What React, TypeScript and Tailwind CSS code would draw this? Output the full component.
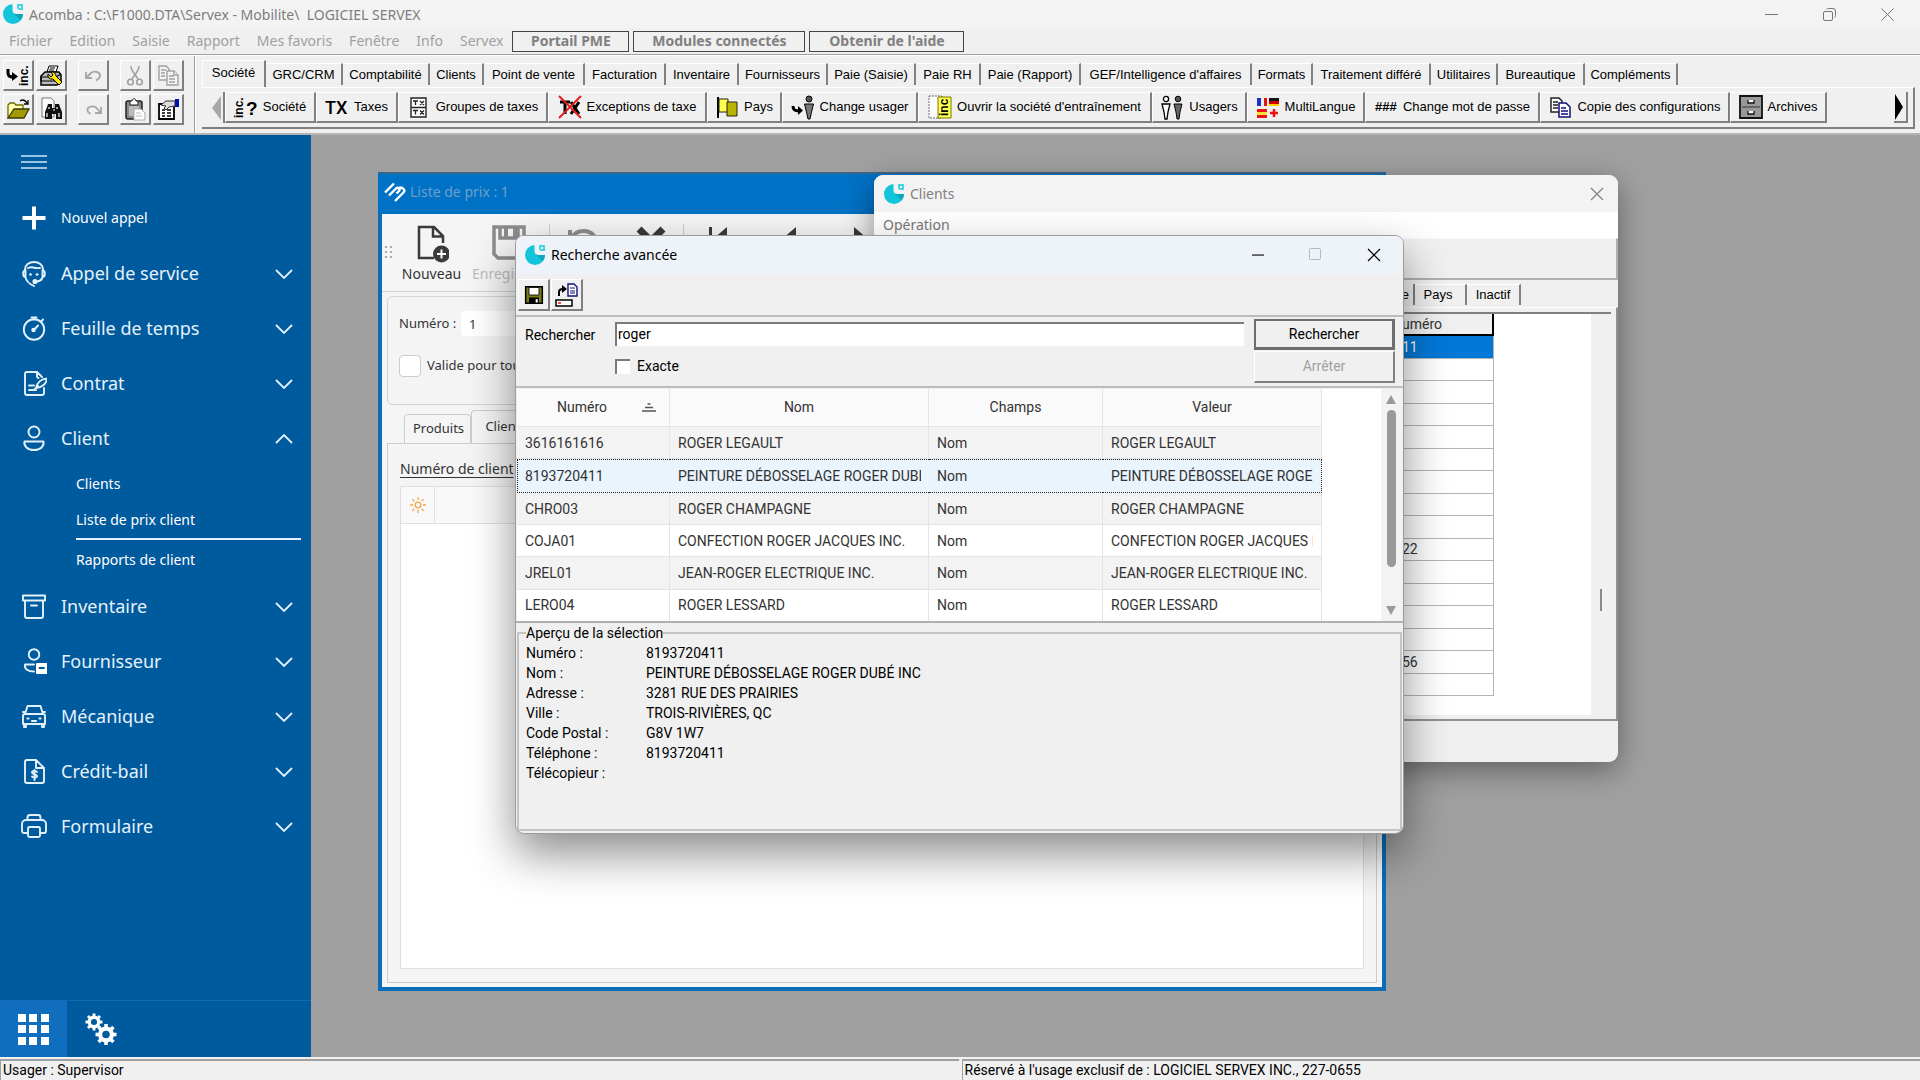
import { ReactNode } from 'react';

const raised = 'border-t border-l border-t-white border-l-white border-b-2 border-r-2 border-b-[#808080] border-r-[#808080] bg-[#f0f0f0]';

/* ---------- logos ---------- */

function AcombaLogo({ className = '' }: { className?: string }) {
    return (
        <svg width="22" height="22" viewBox="0 0 22 22" className={`shrink-0 ${className}`}>
            <path d="M10.500 1A10 10 0 1 0 21 11H14.500a4 4 0 0 1-4-4Z" fill="#12c5da" />
            <path d="M14 11h7a10 10 0 0 1-2.500 6.500L12 10.500Z" fill="#0fa5ba" />
            <path d="M15 1h6v6h-3.500A2.500 2.500 0 0 1 15 4.500Z" fill="#43d3e2" />
            <rect x="17" y="3" width="2" height="2" fill="#e9fafc" />
        </svg>
    );
}

function ServexLogo() {
    return (
        <svg width="22" height="22" viewBox="0 0 22 22" fill="none" stroke="#fff" strokeWidth="2.400" strokeLinejoin="round" className="shrink-0">
            <path d="M1 11.500 10 2.500" />
            <path d="M5 14.500 11.500 8c1.500-1.500 2.500-1.500 3.500-.5s.5 2-.5 3l-2 2" />
            <path d="M14 8c2-2 4-1.500 5.500 0s1 2.500 0 3.500L11 20" />
        </svg>
    );
}

/* ---------- classic toolbar icons ---------- */

const classicIcons: Record<string, ReactNode> = {
    company: (
        <>
            <path d="M2 6v4c0 3 2 4 5 4" fill="none" stroke="#000" strokeWidth="3" />
            <path d="M6 9v9l6-4.500Z" fill="#000" />
            <text transform="translate(22 23) rotate(-90)" fontSize="12" fontWeight="700" fontFamily="Liberation Sans, sans-serif">inc.</text>
        </>
    ),
    print: (
        <>
            <path d="M8 9 10 3h9l-2 6Z" fill="#fff" stroke="#000" />
            <path d="M2 13 6 9h14l2 3v6l-4 4H2Z" fill="#bbb" stroke="#000" strokeWidth="1.500" />
            <path d="M2 14h15v4H2ZM17 14l5-3M11 5h5M10 7h5" fill="none" stroke="#000" strokeWidth="1.200" />
            <path d="M9 11a4 4 0 0 0 5 5l6 6 3-3-6-6a4 4 0 0 0-5-4l2 3-2 2Z" fill="#ffe600" stroke="#000" />
        </>
    ),
    undo: <path d="M5 9v6h6M5.500 14.500 10 10c3-2.500 9-1.500 9 2.500 0 2-2 4-4 5" fill="none" stroke="#a6a6a6" strokeWidth="1.800" />,
    redo: <path d="M20 10v6h-6M19.500 15.500 15 10.500c-4-2.500-9-.5-8.500 3 .3 1.500 1 2.500 3 3.500" fill="none" stroke="#a6a6a6" strokeWidth="1.800" />,
    cut: (
        <g fill="none" stroke="#a0a0a0" strokeWidth="1.600">
            <path d="M8 3c0 5 4 8 7 13M16 3c0 5-4 8-7 13" />
            <circle cx="7.500" cy="19" r="2.800" />
            <circle cx="16.500" cy="19" r="2.800" />
        </g>
    ),
    copy: (
        <g fill="#f4f4f4" stroke="#a0a0a0" strokeWidth="1.400">
            <path d="M3 3h7l3 3v11H3Z" />
            <path d="M11 8h7l4 4v10H11Z" />
            <path d="M5 7h5M5 10h4M5 13h4M13 13h5M13 16h6M13 19h6M18 8v4h4" />
        </g>
    ),
    open: (
        <>
            <path d="M2 21V8l2-2h4l2 2h7v4" fill="#ffffb0" stroke="#6e6a00" strokeWidth="1.300" />
            <path d="M2 21 8 12h15l-5 9Z" fill="#a39c00" stroke="#3c3900" strokeWidth="1.300" />
            <path d="M14 4c3-2 5-1 7 2M22 3v4h-4" fill="none" stroke="#000" strokeWidth="1.300" />
        </>
    ),
    find: (
        <>
            <path d="M3 1h9l3 3v16H3Z" fill="#fff" stroke="#777" />
            <path d="M9 7h4v4h3V7h4l1 3 2 5v7h-6v-5h-4v5H6v-7l2-5Z" fill="#111" />
            <path d="M10 10v2M18 10v2M8 16v4M20 16v4M14 13h2" stroke="#fff" strokeWidth="1.200" />
        </>
    ),
    paste: (
        <>
            <rect x="3" y="4" width="16" height="18" rx="2" fill="#888" stroke="#222" strokeWidth="1.500" />
            <path d="M7 5c0-1 1-1 2-1 0-3 4-3 4 0 1 0 2 0 2 1v3H7Z" fill="#fff" stroke="#222" />
            <rect x="6" y="9" width="10" height="10" fill="#bbb" />
            <path d="M11 12h7l4 4v7H11Z" fill="#fff" stroke="#aaa" />
            <path d="M13 16h5M13 19h6" stroke="#bbb" />
        </>
    ),
    props: (
        <>
            <path d="M3 7h15v15H3Z" fill="#fff" stroke="#000" strokeWidth="1.800" />
            <path d="M6 13h3M11 13h4M6 16h3M11 16h4M6 19h3M11 19h4" stroke="#000" strokeWidth="1.300" />
            <path d="M5 8 10 4h9v5l-6 1-3 3-2-2 2-2Z" fill="#ddd" stroke="#333" />
            <rect x="19" y="2" width="4" height="8" fill="#0010a8" />
        </>
    ),
    companyHelp: (
        <>
            <text transform="translate(9 23) rotate(-90)" fontSize="12" fontWeight="700" fontFamily="Liberation Sans, sans-serif">inc.</text>
            <text x="12" y="20" fontSize="19" fontWeight="700" fontFamily="Liberation Sans, sans-serif">?</text>
        </>
    ),
    tax: <text x="0" y="19" fontSize="18" fontWeight="500" fontFamily="Roboto, Liberation Sans, sans-serif">TX</text>,
    taxGroup: (
        <>
            <path d="M4 3h15v19H4ZM4 12.500h15" fill="#fff" stroke="#222" strokeWidth="1.400" />
            <path d="M6 6h5M8.500 6v4M13 6l4 4M17 6l-4 4M6 15.500h5M8.500 15.500v4M13 15.500l4 4M17 15.500l-4 4" stroke="#222" strokeWidth="1.300" />
        </>
    ),
    taxCross: (
        <>
            <path d="M2 7h10M7 7v12M13 7l8 12M21 7l-8 12" stroke="#000" strokeWidth="3" />
            <path d="M1 1l22 22M23 1 1 23" stroke="#e4201f" strokeWidth="2" />
        </>
    ),
    flag: (
        <>
            <path d="M3 2v21" stroke="#000" strokeWidth="2" />
            <path d="M4 4h9v13H4Z" fill="#ffff4d" stroke="#222" />
            <path d="M12 7h10v14H12Z" fill="#b9b400" stroke="#222" />
        </>
    ),
    userChange: (
        <>
            <path d="M2 11c0 4 2 5 6 5" fill="none" stroke="#000" strokeWidth="3" />
            <path d="M7 11v9l5-4.500Z" fill="#000" />
            <circle cx="18" cy="4" r="3" fill="#555" stroke="#000" />
            <path d="M13.500 9h9l-2 8-1.500 7h-2L15.500 17Z" fill="#777" stroke="#000" />
        </>
    ),
    training: (
        <>
            <path d="M1 1h13v22H1Z" fill="#fff" stroke="#666" strokeDasharray="2 1" />
            <path d="M10 2h13v21H10Z" fill="#ffff4d" stroke="#7c7700" />
            <text transform="translate(20 21) rotate(-90)" fontSize="12" fontWeight="700" fontFamily="Liberation Sans, sans-serif">inc</text>
        </>
    ),
    users: (
        <>
            <circle cx="6" cy="4" r="2.600" fill="#fff" stroke="#000" strokeWidth="1.300" />
            <path d="M2 9h8l-2 8-1 7H5L4 17Z" fill="#fff" stroke="#000" strokeWidth="1.300" />
            <circle cx="18" cy="4" r="2.800" fill="#555" stroke="#000" />
            <path d="M14 9h8l-2 8-1 7h-2l-1-7Z" fill="#666" stroke="#000" />
        </>
    ),
    languages: (
        <>
            <path d="M1 3h4v8H1Z" fill="#1e2fd0" />
            <path d="M8 3h3v8H8Z" fill="#e11" />
            <path d="M13 3h10v3H13Z" fill="#111" />
            <path d="M13 6h10v3H13Z" fill="#c00" />
            <path d="M13 9h10v2H13Z" fill="#fc0" />
            <path d="M1 14h10v3H1ZM1 20h10v3H1Z" fill="#e11" />
            <path d="M1 17h10v3H1Z" fill="#fd3" />
            <path d="M18 14v8M14 18h8" stroke="#e11" strokeWidth="2.500" />
        </>
    ),
    hashes: <text x="1" y="16" fontSize="13" fontWeight="700" fontFamily="Liberation Sans, sans-serif">###</text>,
    copyConfig: (
        <g fill="#fff" strokeWidth="1.500">
            <path d="M3 3h8l3 3v11H3Z" stroke="#222" />
            <path d="M5 7h5M5 10h5M5 13h5" stroke="#222" />
            <path d="M11 8h7l4 4v10H11Z" stroke="#10107c" />
            <path d="M13 13h5M13 16h7M13 19h7" stroke="#10107c" />
        </g>
    ),
    archive: (
        <>
            <path d="M1 1h22v22H1Z" fill="#999" stroke="#111" strokeWidth="1.800" />
            <path d="M3 12h18" stroke="#555" strokeWidth="1.500" />
            <path d="M9 5v3h6V5M9 16v3h6v-3" fill="#fff" stroke="#111" strokeWidth="1.300" />
        </>
    ),
    save: (
        <>
            <path d="M2 2h20v20H2Z" fill="#7b7a16" stroke="#000" strokeWidth="1.800" />
            <path d="M6 3h12v9H6Z" fill="#fff" stroke="#000" />
            <path d="M6 15h12v7H6Z" fill="#000" />
            <path d="M14 17h2.500v4H14Z" fill="#fff" />
        </>
    ),
    restore: (
        <>
            <path d="M4 13V9c0-2 2-3 4-3" fill="none" stroke="#000" strokeWidth="2" />
            <path d="M7 2v8l5-4Z" fill="#000" />
            <path d="M13 1h6l3 3v9h-9Z" fill="#fff" stroke="#10107c" strokeWidth="1.400" />
            <path d="M15 5h5M15 8h5M15 10h5" stroke="#10107c" />
            <path d="M1 17h16v6H1Z" fill="#fff" stroke="#000" strokeWidth="1.500" />
            <path d="M3 20h3" stroke="#e11" strokeWidth="1.500" />
        </>
    ),
};

function ClassicIcon({ name, size = 24 }: { name: string; size?: number }) {
    return <svg width={size} height={size} viewBox="0 0 24 24" className="shrink-0 overflow-visible">{classicIcons[name]}</svg>;
}

/* ---------- sidebar icons ---------- */

const navIcons: Record<string, ReactNode> = {
    headset: (
        <>
            <path d="M4 11V9.500C4 5 8 2 13 2s9 3 9 7.500V11" />
            <path d="M4 10.500c-2.500.5-2.500 6.500.5 6.500V10M4.500 17c.5 4 4 7 8.500 9M22 10.500c2.500.5 2.500 6.500-.5 6.500v-7M21.500 17c-.5 3-3 4.500-7 4.500" />
            <path d="M7 8c5-2.500 5 1 12 0" />
            <circle cx="9.500" cy="14.500" r="1" fill="#e3f1fb" strokeWidth="0.800" />
            <circle cx="16" cy="14.500" r="1" fill="#e3f1fb" strokeWidth="0.800" />
            <circle cx="14" cy="21.500" r="1.600" fill="#e3f1fb" />
        </>
    ),
    timer: (
        <>
            <circle cx="13" cy="14.500" r="10.200" />
            <path d="M10.500 2.500h5M13 2.500v2M20.500 6l1.500-1.500M13 15l4-4.500" />
            <circle cx="12.500" cy="15" r="1.300" fill="#fff" />
        </>
    ),
    contract: (
        <>
            <path d="M16 2H6a2 2 0 0 0-2 2v19a2 2 0 0 0 2 2h15a2 2 0 0 0 2-2v-5" />
            <path d="M16 2v4.500c0 1 .5 1.500 1.500 1.500M16 2l5 5" />
            <path d="M15 18c1-5 5-9 11-9.500-.5 5-5 9-11 9.500Zm-2 2 4-4" />
            <path d="M8 15.500h5M8 20h7" />
        </>
    ),
    person: (
        <>
            <circle cx="13" cy="7" r="5.500" />
            <path d="M3.500 16.500h19c1 4.500-3 8.500-9.500 8.500s-10.500-4-9.500-8.500Z" />
        </>
    ),
    box: <path d="M2 2.500h22v5H2ZM4 7.500h18V23a2 2 0 0 1-2 2H6a2 2 0 0 1-2-2ZM10 12.500h6" />,
    supplier: (
        <>
            <circle cx="13" cy="6.500" r="5.300" />
            <path d="M13 16.500H4c-1 4.500 3 7 9 7" />
            <rect x="15" y="15" width="11.500" height="11" rx="1" fill="#fff" stroke="none" />
            <path d="M18.500 20h4.500" stroke="#005a9e" />
        </>
    ),
    car: (
        <>
            <path d="M4 11 6.500 3h13L22 11M4 11h18a2 2 0 0 1 2 2v8H2v-8a2 2 0 0 1 2-2ZM3 21v3h2v-3M21 21v3h2v-3M2 9h2M22 9h2" />
            <path d="M6.500 15.500h1M18.500 15.500h1M11 18h4" strokeWidth="2.200" />
        </>
    ),
    credit: (
        <>
            <path d="M15 2H6a2 2 0 0 0-2 2v19a2 2 0 0 0 2 2h15a2 2 0 0 0 2-2V10ZM15 2v8h8" />
            <path d="M16 14c-1-1.500-5-1.500-5 .5s5 1.500 5 3.500-4 2-5 .5M13.500 12v10" />
        </>
    ),
    printer: (
        <>
            <path d="M6.500 7V4.500a2.500 2.500 0 0 1 2.500-2.500h8a2.500 2.500 0 0 1 2.500 2.500V7M7 20H3a2 2 0 0 1-2-2v-7a4 4 0 0 1 4-4h16a4 4 0 0 1 4 4v7a2 2 0 0 1-2 2h-4" />
            <rect x="7" y="14" width="12" height="10" rx="1.500" />
        </>
    ),
};

function NavIcon({ name }: { name: string }) {
    return (
        <svg width="26" height="27" viewBox="0 0 26 27" fill="none" stroke="#e3f1fb" strokeWidth="1.900" strokeLinecap="round" strokeLinejoin="round" className="shrink-0">
            {navIcons[name]}
        </svg>
    );
}

function Gear({ cx, cy, r }: { cx: number; cy: number; r: number }) {
    return (
        <>
            <circle cx={cx} cy={cy} r={r * 0.560} fill="none" stroke="#fff" strokeWidth={r * 0.400} />
            {[0, 45, 90, 135, 180, 225, 270, 315].map((a) => (
                <rect key={a} x={cx - r * 0.170} y={cy - r} width={r * 0.340} height={r * 0.360} fill="#fff" transform={`rotate(${a} ${cx} ${cy})`} />
            ))}
        </>
    );
}

const menuItems = ['Fichier', 'Edition', 'Saisie', 'Rapport', 'Mes favoris', 'Fenêtre', 'Info', 'Servex'];

const menuButtons = [
    { label: 'Portail PME', width: 'w-[117px]' },
    { label: 'Modules connectés', width: 'w-[172px]' },
    { label: "Obtenir de l'aide", width: 'w-[155px]' },
];

const quickTools = [
    [['company', 'Société'], ['print', 'Imprimer'], ['undo', 'Annuler'], ['cut', 'Couper'], ['copy', 'Copier']],
    [['open', 'Ouvrir'], ['find', 'Chercher'], ['redo', 'Rétablir'], ['paste', 'Coller'], ['props', 'Propriétés']],
];

const ribbonTabs = [
    { label: 'GRC/CRM', width: 'w-[77px]' },
    { label: 'Comptabilité', width: 'w-[87px]' },
    { label: 'Clients', width: 'w-[54px]' },
    { label: 'Point de vente', width: 'w-[101px]' },
    { label: 'Facturation', width: 'w-[81px]' },
    { label: 'Inventaire', width: 'w-[73px]' },
    { label: 'Fournisseurs', width: 'w-[89px]' },
    { label: 'Paie (Saisie)', width: 'w-[88px]' },
    { label: 'Paie RH', width: 'w-[65px]' },
    { label: 'Paie (Rapport)', width: 'w-[100px]' },
    { label: "GEF/Intelligence d'affaires", width: 'w-[171px]' },
    { label: 'Formats', width: 'w-[61px]' },
    { label: 'Traitement différé', width: 'w-[118px]' },
    { label: 'Utilitaires', width: 'w-[67px]' },
    { label: 'Bureautique', width: 'w-[87px]' },
    { label: 'Compléments', width: 'w-[93px]' },
];

const ribbonButtons = [
    { icon: 'companyHelp', label: 'Société', width: 'w-[91px]' },
    { icon: 'tax', label: 'Taxes', width: 'w-[82px]' },
    { icon: 'taxGroup', label: 'Groupes de taxes', width: 'w-[150px]' },
    { icon: 'taxCross', label: 'Exceptions de taxe', width: 'w-[159px]' },
    { icon: 'flag', label: 'Pays', width: 'w-[75px]' },
    { icon: 'userChange', label: 'Change usager', width: 'w-[136px]' },
    { icon: 'training', label: "Ouvrir la société d'entraînement", width: 'w-[234px]' },
    { icon: 'users', label: 'Usagers', width: 'w-[95px]' },
    { icon: 'languages', label: 'MultiLangue', width: 'w-[118px]' },
    { icon: 'hashes', label: 'Change mot de passe', width: 'w-[175px]' },
    { icon: 'copyConfig', label: 'Copie des configurations', width: 'w-[190px]' },
    { icon: 'archive', label: 'Archives', width: 'w-[97px]' },
];

const navItems = [
    { icon: 'headset', label: 'Appel de service' },
    { icon: 'timer', label: 'Feuille de temps' },
    { icon: 'contract', label: 'Contrat' },
    { icon: 'person', label: 'Client', children: ['Clients', 'Liste de prix client', 'Rapports de client'] },
    { icon: 'box', label: 'Inventaire' },
    { icon: 'supplier', label: 'Fournisseur' },
    { icon: 'car', label: 'Mécanique' },
    { icon: 'credit', label: 'Crédit-bail' },
    { icon: 'printer', label: 'Formulaire' },
];

const results = [
    ['3616161616', 'ROGER LEGAULT'],
    ['8193720411', 'PEINTURE DÉBOSSELAGE ROGER DUBÉ INC'],
    ['CHRO03', 'ROGER CHAMPAGNE'],
    ['COJA01', 'CONFECTION ROGER JACQUES INC.'],
    ['JREL01', 'JEAN-ROGER ELECTRIQUE INC.'],
    ['LERO04', 'ROGER LESSARD'],
];

const preview = [
    ['Numéro :', '8193720411'],
    ['Nom :', 'PEINTURE DÉBOSSELAGE ROGER DUBÉ INC'],
    ['Adresse :', '3281 RUE DES PRAIRIES'],
    ['Ville :', 'TROIS-RIVIÈRES, QC'],
    ['Code Postal :', 'G8V 1W7'],
    ['Téléphone :', '8193720411'],
    ['Télécopieur :', ''],
];

const clientNumbers = ['11', '', '', '', '', '', '', '', '', '22', '', '', '', '', '56', ''];

/* ---------- application frame ---------- */

function TitleBar() {
    return (
        <div className="flex h-[28px] items-center bg-[#f3f3f3] pl-[2px]">
            <AcombaLogo />
            <h1 className="ml-[5px] whitespace-pre text-[14px] text-[#7d7d7d]">{'Acomba : C:\\F1000.DTA\\Servex - Mobilite\\  LOGICIEL SERVEX'}</h1>
            <div className="ml-auto mr-[26px] flex items-center gap-[45px]">
                <button aria-label="Réduire"><svg width="13" height="13" stroke="#777"><path d="M0 6.500h13" /></svg></button>
                <button aria-label="Restaurer">
                    <svg width="13" height="13" fill="none" stroke="#777">
                        <rect x="0.500" y="3.500" width="9" height="9" rx="1.500" />
                        <path d="M3.500 1.500c.5-1 1-1 2-1H10a2.500 2.500 0 0 1 2.500 2.500v4.500c0 1 0 1.500-1 2" />
                    </svg>
                </button>
                <button aria-label="Fermer"><svg width="13" height="13" stroke="#777"><path d="M.5.5l12 12M12.500.5l-12 12" /></svg></button>
            </div>
        </div>
    );
}

function MenuBar() {
    return (
        <nav className="flex h-[27px] items-center border-b border-[#a0a0a0] bg-[#f0f0f0] pl-[9px] text-[14px] text-[#a0a0a0]">
            <div className="flex gap-[17px] pb-[2px]">
                {menuItems.map((item) => <button key={item}>{item}</button>)}
            </div>
            <div className="ml-[9px] flex gap-1">
                {menuButtons.map((b) => (
                    <button key={b.label} className={`h-[21px] border border-[#444] text-[14px] leading-none font-bold text-[#808080] ${b.width}`}>{b.label}</button>
                ))}
            </div>
        </nav>
    );
}

function Ribbon() {
    return (
        <div className="flex h-[80px] border-t border-b-2 border-t-white border-b-[#b4b4b4] bg-[#f0f0f0] font-['Liberation_Sans',sans-serif] text-[13px] text-black">
            <div className="flex flex-col gap-[3px] py-1 pl-[3px]">
                {quickTools.map((row, i) => (
                    <div key={i} className="flex">
                        {row.map(([icon, label], j) => (
                            <button key={icon} aria-label={label} className={`flex size-[31px] items-center justify-center ${raised} ${j === 1 || j === 4 ? 'ml-[2px]' : j ? 'ml-[11px]' : ''}`}>
                                <ClassicIcon name={icon} />
                            </button>
                        ))}
                    </div>
                ))}
            </div>
            <div className="ml-[10px] border-l border-r border-l-[#a0a0a0] border-r-white" />
            <div className="ml-[6px] mr-[5px] flex min-w-0 flex-1 flex-col pb-[4px]">
                <div className="flex h-[31px] items-end">
                    <button className="h-[27px] w-[64px] border-t border-l border-r-2 border-white border-r-[#808080] pb-[3px]">Société</button>
                    {ribbonTabs.map((t) => (
                        <button key={t.label} className={`mb-[2px] h-[22px] whitespace-nowrap border-t border-r-2 border-t-white border-r-[#808080] text-center ${t.width}`}>{t.label}</button>
                    ))}
                </div>
                <div className="flex flex-1 items-start border-t border-r-2 border-b-2 border-t-white border-r-[#808080] border-b-[#808080] pt-[4px] pl-[9px]">
                    <button aria-label="Défiler à gauche" className="flex h-[31px] w-[14px] items-center border-r-2 border-[#808080]">
                        <svg width="11" height="24"><path d="M10 0v24L1 12Z" fill="#a8a8a8" /></svg>
                    </button>
                    {ribbonButtons.map((b) => (
                        <button key={b.label} className={`flex h-[31px] shrink-0 items-center justify-center gap-[5px] whitespace-nowrap ${raised} ${b.width}`}>
                            <ClassicIcon name={b.icon} />
                            {b.label}
                        </button>
                    ))}
                    <button aria-label="Défiler à droite" className="ml-auto mr-[5px] flex h-[31px] w-[14px] items-center border-r-2 border-b-2 border-[#808080]">
                        <svg width="10" height="26"><path d="M1 0v26L9 13Z" fill="#000" /></svg>
                    </button>
                </div>
            </div>
        </div>
    );
}

function Sidebar() {
    return (
        <aside className="flex w-[311px] shrink-0 flex-col bg-[#005a9e] text-[#e6f2fb]">
            <button aria-label="Menu" className="h-[54px] pl-[21px]">
                <svg width="26" height="14" stroke="#cfe6f7" strokeWidth="1.500"><path d="M0 1h26M0 7h26M0 13h26" /></svg>
            </button>
            <button className="flex h-[57px] items-center gap-[14px] pl-[21px] text-[14px] text-white">
                <svg width="26" height="26" stroke="#fff" strokeWidth="4"><path d="M13 1.500v23M1.500 13h23" /></svg>
                Nouvel appel
            </button>
            {navItems.map((item) => (
                <div key={item.label}>
                    <button className="flex h-[55px] w-full items-center gap-[14px] pr-[18px] pl-[21px] text-[18px]">
                        <NavIcon name={item.icon} />
                        {item.label}
                        <svg width="18" height="10" fill="none" stroke="#e3f1fb" strokeWidth="1.800" className="ml-auto">
                            <path d={item.children ? 'M1 9l8-8 8 8' : 'M1 1l8 8 8-8'} />
                        </svg>
                    </button>
                    {item.children && (
                        <ul className="mr-[10px] ml-[76px] text-[14px] text-white">
                            {item.children.map((c, i) => (
                                <li key={c} className={`flex items-center ${i === 0 ? 'h-[35px]' : 'h-[39px]'} ${i === 1 ? 'border-b-2 border-[#e6f2fb]' : ''}`}>
                                    <a href="#">{c}</a>
                                </li>
                            ))}
                        </ul>
                    )}
                </div>
            ))}
            <div className="mt-auto flex h-[57px] border-t border-[#136ab3]">
                <button aria-label="Modules" className="flex w-[67px] items-center justify-center bg-[#106ebe]">
                    <svg width="31" height="31" fill="#fff">
                        {[0, 11, 23].map((y) => [0, 11, 23].map((x) => <rect key={`${x}-${y}`} x={x} y={y} width="8" height="8" />))}
                    </svg>
                </button>
                <button aria-label="Configuration" className="flex w-[67px] items-center justify-center">
                    <svg width="32" height="33" viewBox="0 0 32 33">
                        <Gear cx={9} cy={9} r={8.5} />
                        <Gear cx={21} cy={21.500} r={10.500} />
                    </svg>
                </button>
            </div>
        </aside>
    );
}

/* ---------- MDI windows ---------- */

function PriceListWindow() {
    return (
        <section className="absolute top-[37px] left-[67px] flex h-[819px] w-[1008px] flex-col border-4 border-t-2 border-[#0b6cb8] border-t-[#3d6688] bg-[#f5f5f5]">
            <header className="-mx-1 flex h-[40px] items-center bg-[#0072c6] pb-[5px] pl-[6px] text-[14px] text-[#6f9fc9]">
                <ServexLogo />
                <h2 className="ml-1">Liste de prix : 1</h2>
            </header>
            <div className="flex h-[78px] shrink-0 border-b border-[#d2d2d2] pt-[10px] text-[14px] text-[#333]">
                <svg width="10" height="14" fill="#aaa" className="mt-[22px] ml-[3px]">
                    {[0, 5, 10].map((y) => [0, 5].map((x) => <rect key={`${x}-${y}`} x={x} y={y} width="2" height="2" />))}
                </svg>
                <button className="flex w-[73px] flex-col items-center">
                    <svg width="34" height="39" viewBox="-2 -1 34 39" fill="none" stroke="#3a3a3a" strokeWidth="2.500">
                        <path d="M17 33H2V2h15l9 9v7M16 2v9.500h10" />
                        <circle cx="24.500" cy="29" r="8.500" fill="#3a3a3a" stroke="none" />
                        <path d="M24.500 24.500v9M20 29h9" stroke="#fff" strokeWidth="2" />
                    </svg>
                    Nouveau
                </button>
                <button disabled className="flex w-[81px] flex-col items-center text-[#bbb]">
                    <svg width="34" height="39" viewBox="0 0 34 39" fill="none" stroke="#8c8c8c" strokeWidth="3.500">
                        <path d="M2 3h30v31H6l-4-4ZM8 3v11h18V3" />
                        <path d="M12 2h4v11h-4ZM21 2h4v11h-4Z" fill="#8c8c8c" stroke="none" />
                    </svg>
                    Enregistrer
                </button>
                <div className="border-l border-[#ccc]" />
                <button aria-label="Annuler" disabled className="flex w-[67px] justify-center">
                    <svg width="34" height="34" fill="none" stroke="#8c8c8c" strokeWidth="4"><path d="M3 6v10h10M5 14C9 5 24 4 29 15s-4 16-12 16" /></svg>
                </button>
                <button aria-label="Supprimer" className="flex w-[66px] justify-center">
                    <svg width="34" height="34" stroke="#3a3a3a" strokeWidth="7"><path d="M6 5l24 24M30 5 6 29" /></svg>
                </button>
                <div className="border-l border-[#ccc]" />
                <button aria-label="Premier" className="flex w-[68px] justify-center">
                    <svg width="20" height="34" fill="#3a3a3a"><path d="M1 3h3v24H1ZM19 3v24L5 15Z" /></svg>
                </button>
                <button aria-label="Précédent" className="flex w-[70px] justify-center">
                    <svg width="20" height="34" fill="#3a3a3a"><path d="M19 3v24L5 15Z" /></svg>
                </button>
                <button aria-label="Suivant" className="flex w-[82px] justify-center">
                    <svg width="20" height="34" fill="#3a3a3a"><path d="M1 3v24l14-12Z" /></svg>
                </button>
            </div>
            <div className="mx-[5px] mt-1 h-[109px] shrink-0 rounded-[5px] border border-[#d4d4d4] bg-[#f4f4f4] pt-[14px] pl-[11px] text-[14px] text-[#333]">
                <div className="flex h-[25px] items-center">
                    <label htmlFor="price-number" className="w-[62px] whitespace-nowrap text-[13px]">Numéro :</label>
                    <input id="price-number" defaultValue="1" className="h-[25px] w-[140px] rounded-[4px] bg-white pl-[8px] text-[13px]" />
                </div>
                <label className="mt-[19px] flex items-center gap-[6px] text-[13px]">
                    <input type="checkbox" className="size-[22px] appearance-none rounded-[4px] border border-[#ccc] bg-white" />
                    Valide pour tous les clients
                </label>
            </div>
            <div className="mt-1 flex h-[34px] shrink-0 items-end pl-[22px] text-[13px] text-[#333]">
                <button className="h-[29px] w-[67px] rounded-t-[4px] border border-b-0 border-[#ccc] pl-[2px]">Produits</button>
                <button className="h-[33px] w-[70px] rounded-t-[4px] border border-b-0 border-[#ccc] bg-[#f5f5f5]">Clients</button>
            </div>
            <div className="mx-[5px] mb-1 flex flex-1 flex-col border border-[#ccc] bg-[#f4f4f4] px-3 pb-[13px]">
                <a href="#" className="mt-[14px] mb-[6px] self-start text-[14px] leading-[22px] text-[#333] underline underline-offset-[3px]">Numéro de client</a>
                <div className="flex-1 border border-[#e0e0e0] bg-white">
                    <div className="flex h-[37px] border-b border-[#e0e0e0] bg-[#f9f9f9]">
                        <div className="flex w-[34px] items-center justify-center border-r border-[#e0e0e0]">
                            <svg width="16" height="16" viewBox="0 0 16 16" fill="none" stroke="#f5a54a" strokeWidth="1.300">
                                <circle cx="8" cy="8" r="2.800" />
                                <path d="M8 0v3M8 13v3M0 8h3M13 8h3M2.300 2.300l2 2M11.700 11.700l2 2M13.700 2.300l-2 2M4.300 11.700l-2 2" />
                            </svg>
                        </div>
                    </div>
                </div>
            </div>
        </section>
    );
}

function ClientsWindow() {
    return (
        <section className="absolute top-[40px] left-[563px] flex h-[587px] w-[744px] flex-col overflow-hidden rounded-[9px] bg-[#f0f0f0] shadow-[0_8px_30px_rgba(0,0,0,0.4)]">
            <header className="flex h-[37px] shrink-0 items-center bg-[#f3f3f3] pl-[9px] text-[14px] text-[#808080]">
                <AcombaLogo />
                <h2 className="ml-[5px]">Clients</h2>
                <button aria-label="Fermer" className="mr-[14px] ml-auto"><svg width="14" height="14" stroke="#808080" strokeWidth="1.200"><path d="M1 1l12 12M13 1 1 13" /></svg></button>
            </header>
            <nav className="h-[26px] shrink-0 bg-white pl-[9px] text-[14px] leading-[26px] text-[#777]"><button>Opération</button></nav>
            <div className="h-[42px] shrink-0 border-t border-r-2 border-b-2 border-t-[#f8f8f8] border-[#b0b0b0]" />
            <div className="flex h-[27px] shrink-0 items-start justify-end pt-[4px] pr-[97px] font-['Liberation_Sans',sans-serif] text-[13px] text-black">
                <button className="h-[21px] w-[80px] border-r-2 border-[#808080] pr-1 text-right">Code</button>
                <button className="h-[21px] w-[52px] border-r-2 border-t border-t-white border-[#808080] pr-1">Pays</button>
                <button className="h-[21px] w-[54px] border-r-2 border-t border-t-white border-[#808080]">Inactif</button>
            </div>
            <div className="flex min-h-0 flex-1 border-t border-r-2 border-b-2 border-t-white border-[#909090] pt-[4px] pr-[5px] pb-[4px] font-['Roboto','Liberation_Sans',sans-serif] text-[14px] text-[#333]">
                <div className="flex flex-1 border-t-2 border-[#808080] bg-white">
                    <div className="w-[620px]">
                        <table className="ml-auto h-[382px] w-[110px] table-fixed border-separate border-spacing-0">
                            <thead>
                                <tr className="h-[22px]"><th className="h-[22px] border-r-2 border-b-2 border-black bg-[#f0f0f0] p-0 pl-2 text-left leading-none font-normal">Numéro</th></tr>
                            </thead>
                            <tbody>
                                {clientNumbers.map((n, i) => (
                                    <tr key={i}>
                                        <td className={`border-r border-b border-[#b4b4b4] p-0 pl-[18px] leading-[18px] ${i === 0 ? 'bg-[#0078d7] text-white' : ''}`}>{n || '\u00a0'}</td>
                                    </tr>
                                ))}
                            </tbody>
                        </table>
                    </div>
                    <div className="ml-auto flex w-[20px] justify-center bg-[#f0f0f0] pt-[275px]">
                        <div className="h-[22px] w-[2px] bg-[#8a8a8a]" />
                    </div>
                </div>
            </div>
            <footer className="h-[41px] shrink-0" />
        </section>
    );
}

function SearchDialog() {
    return (
        <section className="absolute top-[100px] left-[204px] flex h-[599px] w-[889px] flex-col overflow-hidden rounded-[9px] border border-[#9c9c9c] bg-[#f0f0f0] font-['Roboto','Liberation_Sans',sans-serif] text-[14px] text-black shadow-[0_20px_45px_rgba(0,0,0,0.45)]">
            <header className="flex h-[38px] shrink-0 items-center bg-[#eef3f9] pb-px pl-[8px] font-['Noto_Sans',sans-serif]">
                <AcombaLogo />
                <h2 className="ml-[5px]">Recherche avancée</h2>
                <div className="mr-[22px] ml-auto flex items-center gap-[45px]">
                    <button aria-label="Réduire"><svg width="12" height="12" stroke="#000" strokeWidth="1.200"><path d="M0 6h12" /></svg></button>
                    <button aria-label="Agrandir" disabled><svg width="13" height="13" fill="none" stroke="#b5b9be"><rect x="0.500" y="0.500" width="11" height="11" rx="1" /></svg></button>
                    <button aria-label="Fermer"><svg width="14" height="14" stroke="#000" strokeWidth="1.200"><path d="M1 1l12 12M13 1 1 13" /></svg></button>
                </div>
            </header>
            <div className="flex h-[43px] shrink-0 gap-px border-b-2 border-[#bdbdbd] pt-[5px] pl-[2px]">
                <button aria-label="Enregistrer" className={`flex size-[32px] items-center justify-center ${raised}`}><ClassicIcon name="save" size={20} /></button>
                <button aria-label="Restaurer" className={`flex size-[32px] items-center justify-center ${raised}`}><ClassicIcon name="restore" /></button>
            </div>
            <form className="flex h-[71px] shrink-0 border-b-2 border-[#bdbdbd] pr-2 pl-[9px]">
                <label htmlFor="search-text" className="mt-[6px] w-[90px] leading-[24px]">Rechercher</label>
                <div className="mr-[10px] flex-1 pt-[5px]">
                    <input id="search-text" defaultValue="roger" className="h-[24px] w-full border-t-2 border-l-2 border-[#7a7a7a] bg-white pb-[2px] pl-px" />
                    <label className="mt-[11px] flex items-center gap-[7px] leading-[18px]">
                        <input type="checkbox" className="size-[15px] appearance-none border-t-2 border-l-2 border-[#7a7a7a] bg-white" />
                        Exacte
                    </label>
                </div>
                <div className="flex w-[141px] flex-col gap-px pt-[2px]">
                    <button type="button" className="h-[31px] border-2 border-r-[3px] border-b-[3px] border-[#6e6e6e] bg-[#f0f0f0]">Rechercher</button>
                    <button type="button" disabled className={`h-[32px] text-[#a0a0a0] ${raised}`}>Arrêter</button>
                </div>
            </form>
            <div className="flex h-[235px] shrink-0 border-b-2 border-[#b0b0b0] pt-px pr-[2px] pl-px">
                <div className="flex-1 overflow-hidden bg-white">
                    <table className="h-[233px] w-[805px] table-fixed border-separate border-spacing-0 text-[#333]">
                        <colgroup>
                            <col className="w-[153px]" />
                            <col className="w-[259px]" />
                            <col className="w-[174px]" />
                            <col className="w-[219px]" />
                        </colgroup>
                        <thead>
                            <tr className="h-[38px] bg-[#fafafa]">
                                {['Numéro', 'Nom', 'Champs', 'Valeur'].map((h, i) => (
                                    <th key={h} className="h-[38px] border-r border-b border-[#e4e4e4] p-0 font-normal">
                                        {i === 0 ? (
                                            <div className="flex items-center justify-end gap-[35px] pr-[13px]">
                                                {h}
                                                <svg width="14" height="9" stroke="#555" strokeWidth="1.300"><path d="M5.500 1h3M3 4.500h8M0 8h14" /></svg>
                                            </div>
                                        ) : h}
                                    </th>
                                ))}
                            </tr>
                        </thead>
                        <tbody>
                            {results.map(([num, name], i) => {
                                const selected = i === 1;
                                const cell = selected
                                    ? 'border-y border-dotted border-[#222] first:border-l first:pl-[7px] last:border-r'
                                    : 'border-r border-b border-[#e4e4e4]';
                                return (
                                    <tr key={num} className={selected ? 'bg-[#eaf4fd]' : i % 2 ? 'bg-white' : 'bg-[#f3f3f3]'}>
                                        {[num, name, 'Nom', name].map((v, j) => (
                                            <td key={j} className={`px-[8px] py-0 ${cell}`}>
                                                <div className="overflow-hidden leading-[20px] whitespace-nowrap">{v}</div>
                                            </td>
                                        ))}
                                    </tr>
                                );
                            })}
                        </tbody>
                    </table>
                </div>
                <div className="flex w-[20px] flex-col items-center bg-[#f3f3f3] py-[6px]">
                    <svg width="10" height="9" fill="#9a9a9a"><path d="M5 0l5 9H0Z" /></svg>
                    <div className="mt-[6px] h-[157px] w-[9px] rounded-full bg-[#999]" />
                    <svg width="10" height="9" fill="#9a9a9a" className="mt-auto"><path d="M5 9l5-9H0Z" /></svg>
                </div>
            </div>
            <fieldset className="mx-px mb-[2px] flex-1 border-2 border-[#c4c4c4] px-[7px] pt-0">
                <legend className="h-[20px] leading-[20px]">Aperçu de la sélection</legend>
                <dl className="grid grid-cols-[120px_1fr] leading-[20px]">
                    {preview.map(([k, v]) => (
                        <div key={k} className="contents">
                            <dt className="h-[20px]">{k}</dt>
                            <dd>{v}</dd>
                        </div>
                    ))}
                </dl>
            </fieldset>
        </section>
    );
}

export default function App() {
    return (
        <div className="flex h-screen flex-col overflow-hidden bg-[#f0f0f0] font-['Noto_Sans',sans-serif]">
            <TitleBar />
            <MenuBar />
            <Ribbon />
            <div className="flex min-h-0 flex-1">
                <Sidebar />
                <main className="relative flex-1 overflow-hidden bg-[#a0a0a0]">
                    <PriceListWindow />
                    <ClientsWindow />
                    <SearchDialog />
                </main>
            </div>
            <footer className="grid h-[23px] shrink-0 grid-cols-2 gap-[3px] pt-[2px] font-['Roboto','Liberation_Sans',sans-serif] text-[14px] leading-[18px] text-black">
                <span className="border-t-2 border-l border-[#a0a0a0] pl-[2px]">Usager : Supervisor</span>
                <span className="border-t-2 border-l border-[#a0a0a0] pl-[2px]">Réservé à l'usage exclusif de : LOGICIEL SERVEX INC., 227-0655</span>
            </footer>
        </div>
    );
}
